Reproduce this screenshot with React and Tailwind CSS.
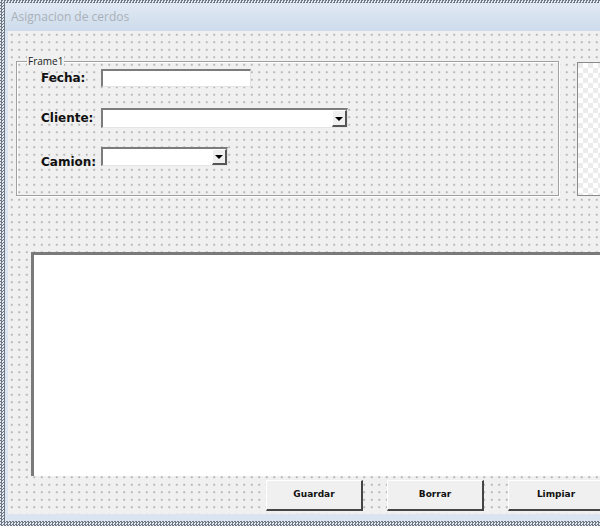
import React from 'react';

const dots = 'bg-[#f0f0f0] bg-[radial-gradient(circle,#a3a3a3_0.55px,transparent_1.05px)] bg-[length:7.5px_7.5px]';

const DropButton = () => (
    <div className="h-full w-[15px] shrink-0 bg-[#f0f0f0] border-t border-l border-white border-r-2 border-b-2 border-r-[#555] border-b-[#555] flex items-center justify-center">
        <div className="w-0 h-0 border-l-[4px] border-r-[4px] border-t-[4px] border-l-transparent border-r-transparent border-t-black mt-[1px]" />
    </div>
);

const Label = ({ children, className = '' }) => (
    <div className={`w-[60px] shrink-0 text-[12px] font-bold text-[#111] ${className}`}>{children}</div>
);

const Button = ({ children }) => (
    <div className="w-[97px] h-[31px] shrink-0 bg-[#f0f0f0] border-t border-l border-white border-r-2 border-b-2 border-r-[#444] border-b-[#444] flex items-center justify-center text-[9px] font-bold text-[#111]">
        {children}
    </div>
);

const App = () => {
    return (
        <div className="w-[600px] h-[526px] overflow-hidden bg-[repeating-conic-gradient(#6f7a86_0_25%,#e2e8ef_0_50%)] bg-[length:3px_3px] pl-[5px] pt-[3px]" style={{ fontFamily: '"DejaVu Sans", sans-serif' }}>
            <div className="h-[518px] bg-[#dbe5f1] pl-[3px] pb-[7px] flex flex-col">
                {/* Title bar */}
                <div className="h-[28px] shrink-0 bg-gradient-to-b from-[#e1e9f4] to-[#cddbeb] flex items-center -ml-[3px]">
                    <span className="text-[12px] text-[#a9b0b8] pl-[6px]" style={{ fontFamily: '"Open Sans", sans-serif' }}>Asignacion de cerdos</span>
                </div>

                {/* Client area */}
                <div className={`flex-1 overflow-hidden ${dots}`}>
                    <div className="flex mt-[30px] ml-[8px]">
                        {/* Frame1 */}
                        <div className="relative w-[543px] h-[135px] shrink-0 border border-[#a0a0a0] shadow-[inset_1px_1px_0_#fff,1px_1px_0_#fff] pl-[24px] pt-[7px]">
                            <span className="absolute -top-[7px] left-[10px] px-[1px] bg-[#f0f0f0] text-[10px] leading-[12px] text-[#222]" style={{ fontFamily: '"Open Sans", sans-serif' }}>Frame1</span>

                            <div className="flex items-center h-[18px]">
                                <Label>Fecha:</Label>
                                <div className="w-[150px] h-[18px] bg-white border-t-2 border-l-2 border-[#7c7c7c] border-r border-b border-r-[#e4e4e4] border-b-[#e4e4e4]" />
                            </div>

                            <div className="flex items-center h-[20px] mt-[21px]">
                                <Label>Cliente:</Label>
                                <div className="w-[247px] h-[20px] bg-white border-t-2 border-l-2 border-[#7c7c7c] border-r border-b border-r-[#e4e4e4] border-b-[#e4e4e4] flex justify-end">
                                    <DropButton />
                                </div>
                            </div>

                            <div className="flex items-start h-[19px] mt-[19px]">
                                <Label className="mt-[6px]">Camion:</Label>
                                <div className="w-[127px] h-[19px] bg-white border-t-2 border-l-2 border-[#7c7c7c] border-r border-b border-r-[#e4e4e4] border-b-[#e4e4e4] flex justify-end">
                                    <DropButton />
                                </div>
                            </div>
                        </div>

                        {/* Picture box */}
                        <div className="ml-[18px] mt-[1px] w-[40px] h-[134px] shrink-0 border border-[#8a8a8a] bg-[#f4f4f4] bg-[repeating-conic-gradient(#ffffff_0_25%,#ececec_0_50%)] bg-[length:10px_10px]" />
                    </div>

                    {/* List box */}
                    <div className="ml-[23px] mt-[56px] w-[600px] h-[224px] bg-white border-t-[3px] border-l-[3px] border-[#7a7a7a]" />

                    {/* Buttons */}
                    <div className="flex gap-[24px] ml-[258px] mt-[4px]">
                        <Button>Guardar</Button>
                        <Button>Borrar</Button>
                        <Button>Limpiar</Button>
                    </div>
                </div>
            </div>
        </div>
    );
};

export default App;
